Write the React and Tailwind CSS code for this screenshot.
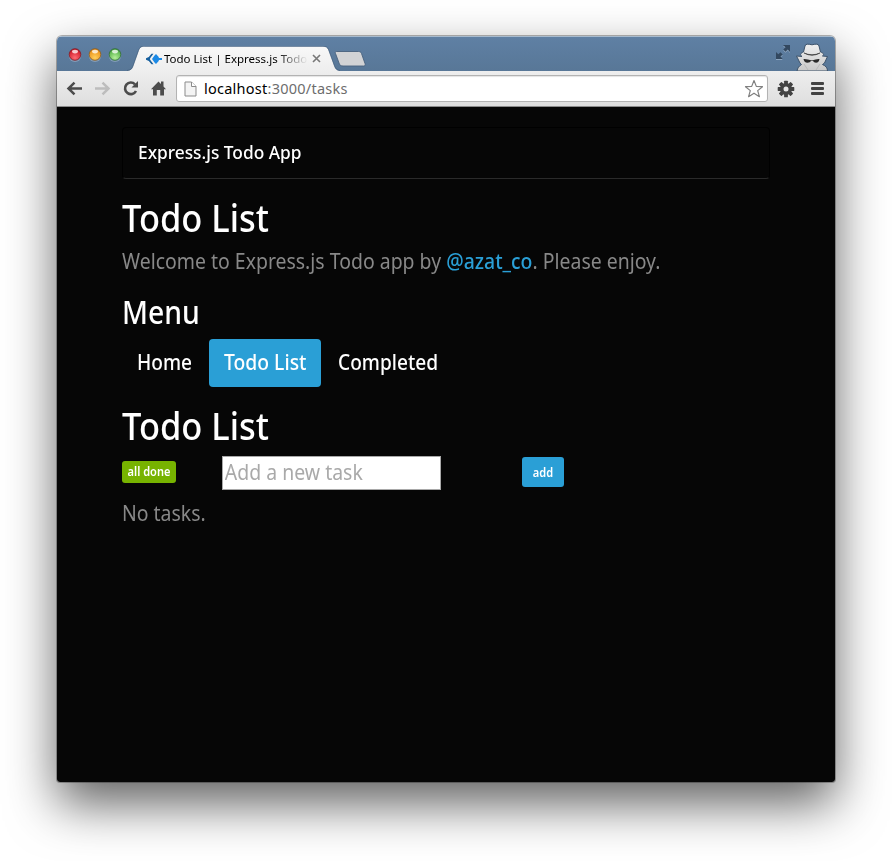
import React from "react";

const lights = [
  ["#ff6b73", "#c9101f", "#7e1a22"],
  ["#ffcf5c", "#e88a10", "#8a5a1c"],
  ["#b5f09a", "#48a83c", "#2f6a35"],
];

function TrafficLights() {
  return (
    <svg width="60" height="20" viewBox="0 0 60 20" className="ml-[8px] mt-[8px] shrink-0">
      {lights.map(([light, dark, rim], i) => (
        <g key={dark}>
          <defs>
            <radialGradient id={"light" + i} cx="50%" cy="78%" r="75%">
              <stop offset="0" stopColor={light} />
              <stop offset="1" stopColor={dark} />
            </radialGradient>
          </defs>
          <circle cx={10 + i * 20} cy="10.8" r="6.200" fill="#9fb4cb" opacity=".6" />
          <circle cx={10 + i * 20} cy="9.500" r="5.800" fill={"url(#light" + i + ")"} stroke={rim} strokeWidth=".8" />
          <ellipse cx={10 + i * 20} cy="6.600" rx="3" ry="1.800" fill="#fff" opacity=".75" />
        </g>
      ))}
    </svg>
  );
}

function Tab() {
  return (
    <div className="relative mt-[9px] h-[25px] w-[214px] shrink-0">
      <svg width="214" height="25" viewBox="0 0 214 25" className="absolute inset-0">
        <defs>
          <linearGradient id="tab" x1="0" y1="0" x2="0" y2="1">
            <stop offset="0" stopColor="#f8f8f8" />
            <stop offset="1" stopColor="#eeeeee" />
          </linearGradient>
        </defs>
        <path d="M0 25C4 24.5 5 23 6 20.5L11.5 5C13 1.5 14 .5 17.5 .5H196C199 .5 200.500 1.500 201.500 4L207.500 20.500C208.500 23 209.500 24.500 213 25Z" fill="url(#tab)" />
        <path d="M0 24.500C4 24 5 22.500 6 20L11.500 4.500C13 1 14 .3 17.500 .3H196C199 .3 200.500 1.200 201.500 3.500L207.500 20C208.500 22.500 209.500 24 213 24.500" fill="none" stroke="#3d5876" strokeWidth=".8" opacity=".75" />
      </svg>
      <div className="relative flex h-[25px] items-center pl-[19px]">
        <svg width="16" height="12" viewBox="0 0 16 12" className="shrink-0">
          <path d="M5.500 .8H7.500L5 4L3.800 6L5 8L7.500 11.200H5.500L2.800 8L0 6.800V5.200L2.800 4Z" fill="#17609f" />
          <path d="M6 6L8.500 2.500L10 1L12.500 3.700L13 5H16V7H13L12.500 8.300L10 11L8.500 9.500Z" fill="#1c8ae6" />
        </svg>
        <span className="ml-[2px] w-[144px] overflow-hidden whitespace-nowrap bg-gradient-to-r from-black from-78% to-transparent to-100% bg-clip-text font-['Noto_Sans',sans-serif] text-[11.5px] leading-[18px] text-transparent">
          Todo List | Express.js Todo
        </span>
        <svg width="9" height="9" viewBox="0 0 9 9" className="ml-[4px] shrink-0" stroke="#777" strokeWidth="1.6">
          <path d="M1 1L8 8M8 1L1 8" />
        </svg>
      </div>
    </div>
  );
}

function TitleBar() {
  return (
    <div className="flex h-[35px] border-t border-[#a7bacd] bg-gradient-to-b from-[#5f80a4] to-[#587797]">
      <TrafficLights />
      <div className="ml-[2px] flex">
        <Tab />
      </div>
      <svg width="34" height="18" viewBox="0 0 34 18" className="-ml-[8px] mt-[13px] shrink-0">
        <path d="M3.500 1.500H25.500C27 1.500 28 2.300 28.500 3.500L32 13.500C32.500 15 32 16 30.500 16H10C8 16 7 15.300 6.400 14L2.500 3.500C2 2.300 2.300 1.500 3.500 1.500Z" fill="#d2d3d5" stroke="#48617d" strokeWidth=".9" />
      </svg>
      <div className="flex-1" />
      <svg width="16" height="16" viewBox="0 0 16 16" className="mt-[7px] shrink-0">
        <g transform="translate(0 1)" fill="#8ea6bf">
          <path d="M8 1H15V8L12.700 5.500L10.500 7.700L8.300 5.500L10.500 3.300Z" />
          <path d="M1 8L3.300 10.300L5.500 8.200L7.700 10.400L5.500 12.500L7.700 15H1Z" />
        </g>
        <path d="M8 1H15V8L12.700 5.500L10.500 7.700L8.300 5.500L10.500 3.300Z" fill="#33485f" />
        <path d="M1 8L3.300 10.300L5.500 8.200L7.700 10.400L5.500 12.500L7.700 15H1Z" fill="#33485f" />
      </svg>
      <svg width="36" height="28" viewBox="0 0 36 28" className="ml-[3px] mr-[5px] mt-[6px] shrink-0">
        <defs>
          <linearGradient id="spy" x1="0" y1="0" x2="0" y2="1">
            <stop offset="0" stopColor="#f0f0f0" />
            <stop offset="1" stopColor="#c8c8c8" />
          </linearGradient>
        </defs>
        <path d="M11 3C11.500 .8 14 .8 18 1.800C22 .8 24.500 .8 25 3L26.500 9C29.500 10 30.500 11.500 28.500 13L33.500 13.500L30.500 20L28.500 21.500C32 23 33.500 25 33.500 28H3C3.500 25 5 23 7.500 21.500L6 20L2.500 13L8 13.500C5.500 12 6.500 10 9.500 9Z" fill="url(#spy)" stroke="#3d536b" strokeWidth="1" />
        <path d="M10 10Q18 13.500 26 10Q22 12.300 18 12.300Q14 12.300 10 10Z" fill="#353535" stroke="#353535" strokeWidth=".6" />
        <path d="M9.500 16Q13 15.800 18 17.500Q22 15.800 25.500 16Q25 19.500 22 19.800Q19.800 19.800 19 18H17Q16.200 19.800 13.500 19.800Q10 19.500 9.500 16Z" fill="#292929" />
        <path d="M10 21L14 27M26 21L22 27" fill="none" stroke="#b4b4b4" strokeWidth=".8" />
      </svg>
    </div>
  );
}

function Toolbar() {
  return (
    <div className="flex h-[36px] items-center border-b border-[#8b8b8b] bg-gradient-to-b from-[#eeeeee] to-[#dedede]">
      <svg width="112" height="20" viewBox="0 0 112 20" className="ml-[7px] shrink-0" fill="none">
        <path d="M18 9.500H5M10.500 3.700L4.500 9.500L10.500 15.300" stroke="#4c4c4c" strokeWidth="2.500" />
        <path d="M31 9.500H44M38.500 3.700L44.500 9.500L38.500 15.300" stroke="#bdbdbd" strokeWidth="2.500" />
        <path d="M71 5.300A5.800 5.800 0 1 0 72 12" stroke="#4c4c4c" strokeWidth="2.600" />
        <path d="M74 2V8.500H67.500Z" fill="#4c4c4c" />
        <path d="M87 10.200L94.500 2.500L97 4.900V2.500H99.500V7.500L102 10.200H100V16.500H96.200V11H92.800V16.500H89V10.200Z" fill="#4c4c4c" />
      </svg>
      <div className="flex h-[27px] w-[592px] items-center rounded-[3px] border border-[#b3b3b3] bg-white shadow-[inset_0_1px_1px_#e4e4e4]">
        <svg width="13" height="16" viewBox="0 0 13 16" className="ml-[7px] shrink-0">
          <path d="M1 1H7.500L12 5.500V15H1Z" fill="#f4f4f4" stroke="#8b8b8b" />
          <path d="M7.500 1V5.500H12" fill="#fff" stroke="#8b8b8b" />
        </svg>
        <span className="-mt-[2px] ml-[7px] flex-1 font-['Noto_Sans',sans-serif] text-[14.5px] leading-[20px] tracking-[0.25px] text-[#6d6d6d]">
          <span className="text-black">localhost</span>:3000/tasks
        </span>
        <svg width="20" height="20" viewBox="0 0 20 20" className="mr-[3px] shrink-0">
          <path d="M10 1.500L12.300 7.400L18.500 7.700L13.700 11.600L15.400 17.700L10 14.200L4.600 17.700L6.300 11.600L1.500 7.700L7.700 7.400Z" fill="#fff" stroke="#808080" strokeWidth="1.200" strokeLinejoin="round" />
        </svg>
      </div>
      <svg width="18" height="18" viewBox="-9 -9 18 18" className="ml-[9px] shrink-0">
        {[0, 45, 90, 135].map((a) => (
          <rect key={a} x="-1.900" y="-8.300" width="3.800" height="16.600" rx=".6" transform={"rotate(" + a + ")"} fill="#434343" />
        ))}
        <circle r="6.100" fill="#434343" />
        <circle r="2.500" fill="#e6e6e6" />
      </svg>
      <div className="ml-[16px] flex flex-col gap-[2px]">
        <div className="h-[3px] w-[13px] rounded-[1px] bg-[#434343]" />
        <div className="h-[3px] w-[13px] rounded-[1px] bg-[#434343]" />
        <div className="h-[3px] w-[13px] rounded-[1px] bg-[#434343]" />
      </div>
    </div>
  );
}

function Page() {
  return (
    <main className="flex-1 whitespace-nowrap bg-[#060606] pl-[65px] pr-[65px] pt-[20px] font-['Noto_Sans','Open_Sans',sans-serif] text-[21px] text-[#888888]">
      <nav className="flex h-[52px] items-center rounded-[4px] border border-black border-b-[#2a2a2a] pl-[15px]">
        <a className="-mt-[2px] origin-left scale-x-[0.962] text-[18px] font-medium leading-[24px] text-white">Express.js Todo App</a>
      </nav>
      <h1 className="mt-[16px] h-[45px] origin-left scale-x-[0.906] text-[38px] font-medium leading-[44px] text-white">Todo List</h1>
      <p className="mt-[6px] h-[31px] origin-left scale-x-[0.926] leading-[31px]">
        Welcome to Express.js Todo app by <a className="font-medium text-[#2a9fd6]">@azat_co</a>. Please enjoy.
      </p>
      <h2 className="mt-[16px] h-[37px] origin-left scale-x-[0.885] text-[32px] font-medium leading-[37px] text-white">Menu</h2>
      <ul className="mt-[9px] flex h-[48px] gap-[2px] font-medium leading-[47px] text-white">
        <li className="w-[85px] pl-[15px]">
          <a className="block origin-left scale-x-[0.91]">Home</a>
        </li>
        <li className="w-[112px] rounded-[4px] bg-[#2a9fd6] pl-[15px]">
          <a className="block origin-left scale-x-[0.92]">Todo List</a>
        </li>
        <li className="pl-[15px]">
          <a className="block origin-left scale-x-[0.91]">Completed</a>
        </li>
      </ul>
      <h1 className="mt-[16px] h-[45px] origin-left scale-x-[0.906] text-[38px] font-medium leading-[44px] text-white">Todo List</h1>
      <div className="mt-[8px] flex h-[34px]">
        <div className="w-[100px] pt-[5px]">
          <button className="block h-[22px] w-[54px] rounded-[3px] bg-[#77b300] text-[12px] font-semibold leading-[22px] text-white">
            <span className="block scale-x-[0.92]">all done</span>
          </button>
        </div>
        <div className="w-[300px]">
          <div className="h-[34px] w-[219px] border border-[#a8a8a8] bg-white">
            <input placeholder="Add a new task" className="block h-[31px] w-[234px] origin-left scale-x-[0.926] bg-transparent pl-[2px] text-[21px] text-black outline-none placeholder:text-[#a9a9a9]" />
          </div>
        </div>
        <button className="mt-px block h-[30px] w-[42px] rounded-[3px] bg-[#2a9fd6] text-[12px] font-semibold leading-[29px] text-white">
          <span className="block scale-x-[0.92]">add</span>
        </button>
      </div>
      <p className="mt-[8px] h-[30px] origin-left scale-x-[0.926] leading-[31px]">No tasks.</p>
    </main>
  );
}

export default function App() {
  return (
    <div className="h-[861px] w-[892px] overflow-hidden bg-white pl-[57px] pt-[36px]">
      <div className="flex h-[746px] w-[778px] flex-col overflow-hidden rounded-t-[5px] rounded-b-[3px] shadow-[0_0_0_1px_rgba(0,0,0,0.28),0_22px_50px_rgba(0,0,0,0.62)]">
        <TitleBar />
        <Toolbar />
        <Page />
      </div>
    </div>
  );
}
